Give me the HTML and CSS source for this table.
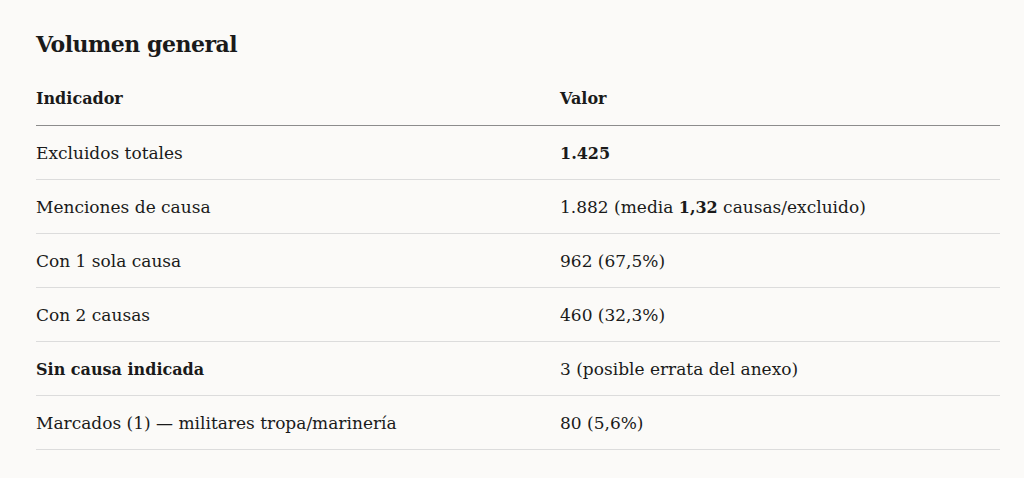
FILE: index.html
```html
<!DOCTYPE html>
<html lang="es">
<head>
<meta charset="utf-8">
<title>Volumen general</title>
<link rel="stylesheet" href="styles.css">
</head>
<body>
<main class="page">
  <h2 class="title">Volumen general</h2>
  <table class="data">
    <thead>
      <tr><th class="c1">Indicador</th><th>Valor</th></tr>
    </thead>
    <tbody>
      <tr><td class="c1">Excluidos totales</td><td><strong>1.425</strong></td></tr>
      <tr><td class="c1">Menciones de causa</td><td>1.882 (media <strong>1,32</strong> causas/excluido)</td></tr>
      <tr><td class="c1">Con 1 sola causa</td><td>962 (67,5%)</td></tr>
      <tr><td class="c1">Con 2 causas</td><td>460 (32,3%)</td></tr>
      <tr><td class="c1"><strong>Sin causa indicada</strong></td><td>3 (posible errata del anexo)</td></tr>
      <tr><td class="c1">Marcados (1) — militares tropa/marinería</td><td>80 (5,6%)</td></tr>
    </tbody>
  </table>
</main>
</body>
</html>
```
FILE: styles.css
```css
html, body {
  margin: 0;
  padding: 0;
  background: #fbfaf8;
}
body {
  font-family: "DejaVu Serif", "Liberation Serif", serif;
  color: #1a1a1a;
}
.page {
  padding: 28px 24px 0 36px;
}
.title {
  margin: 0 0 12px;
  font-size: 22px;
  font-weight: 700;
  line-height: 32px;
  letter-spacing: -0.5px;
}
.data {
  width: 964px;
  border-collapse: collapse;
  font-size: 17px;
}
.data th,
.data td {
  text-align: left;
  padding: 0;
  height: 53px;
  vertical-align: middle;
}
.data th {
  font-size: 16px;
  font-weight: 700;
  height: 53px;
  border-bottom: 1px solid #8c8c8c;
}
.data td {
  border-bottom: 1px solid #dcdcdc;
}
.data .c1 {
  width: 524px;
}
.data strong {
  font-size: 16px;
  font-weight: 700;
}
```
